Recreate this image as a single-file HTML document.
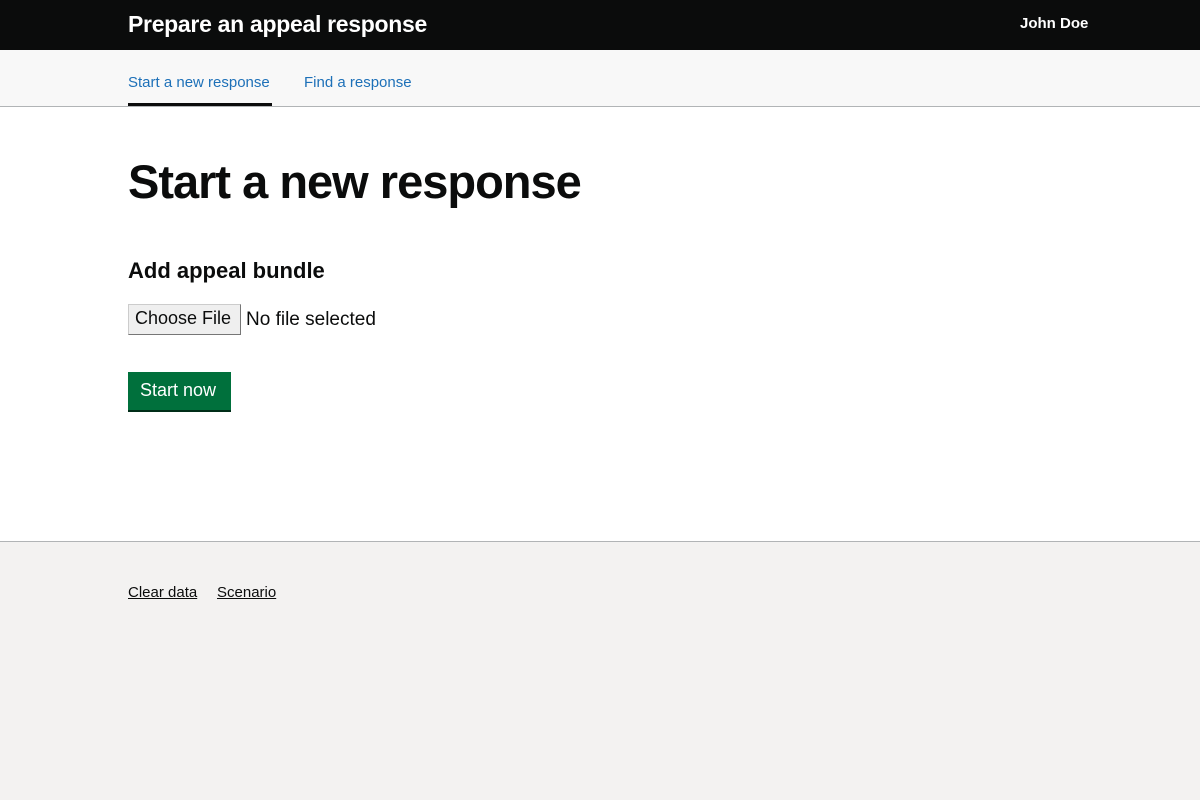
<!DOCTYPE html>
<html><head><style>
*{margin:0;padding:0;box-sizing:border-box}
body{width:1200px;height:800px;font-family:"Liberation Sans",Arial,sans-serif;background:#f3f2f1;color:#0b0c0c;overflow:hidden}
.hdr{background:#0b0c0c;height:50px;position:relative;color:#fff}
.hdr .t{position:absolute;left:128px;top:11px;font-size:23px;font-weight:bold;letter-spacing:-0.3px}
.hdr .u{position:absolute;left:1020px;top:15px;font-size:15px;font-weight:bold}
.nav{background:#f8f8f8;height:57px;border-bottom:1px solid #b1b4b6;position:relative}
.nav a{position:absolute;top:24px;font-size:15px;color:#1d70b8;text-decoration:none;white-space:nowrap}
.nav .a1{left:128px;height:32px;border-bottom:3px solid #0b0c0c;width:144px}
.nav .a2{left:304px}
main{background:#fff;height:435px;position:relative;border-bottom:1px solid #b1b4b6}
h1{position:absolute;left:128px;top:47px;font-size:47px;font-weight:bold;letter-spacing:-1px}
h2{position:absolute;left:128px;top:151px;font-size:22px;font-weight:bold}
.file{position:absolute;left:128px;top:197px;display:flex;align-items:center}
.file span.b{background:#efefef;border:1px solid #767676;border-top-color:#ccc;border-left-color:#ccc;font-size:18px;padding:3px 6px;height:31px;width:113px;font-family:"Liberation Sans",Arial,sans-serif;white-space:nowrap}
.file span.n{font-size:19px;margin-left:5px}
.btn{position:absolute;left:128px;top:265px;width:103px;height:38px;background:#00703c;box-shadow:0 2px 0 #002d18;color:#fff;font-size:18px;padding:8px 12px;white-space:nowrap}
.ft{position:absolute;top:584px;font-size:15px;color:#0b0c0c;text-decoration:underline}
</style></head><body>
<div class="hdr"><div class="t">Prepare an appeal response</div><div class="u">John Doe</div></div>
<div class="nav"><a class="a1">Start a new response</a><a class="a2">Find a response</a></div>
<main>
<h1>Start a new response</h1>
<h2>Add appeal bundle</h2>
<div class="file"><span class="b">Choose File</span><span class="n">No file selected</span></div>
<div class="btn">Start now</div>
</main>
<a class="ft" style="left:128px">Clear data</a><a class="ft" style="left:217px">Scenario</a>
</body></html>
